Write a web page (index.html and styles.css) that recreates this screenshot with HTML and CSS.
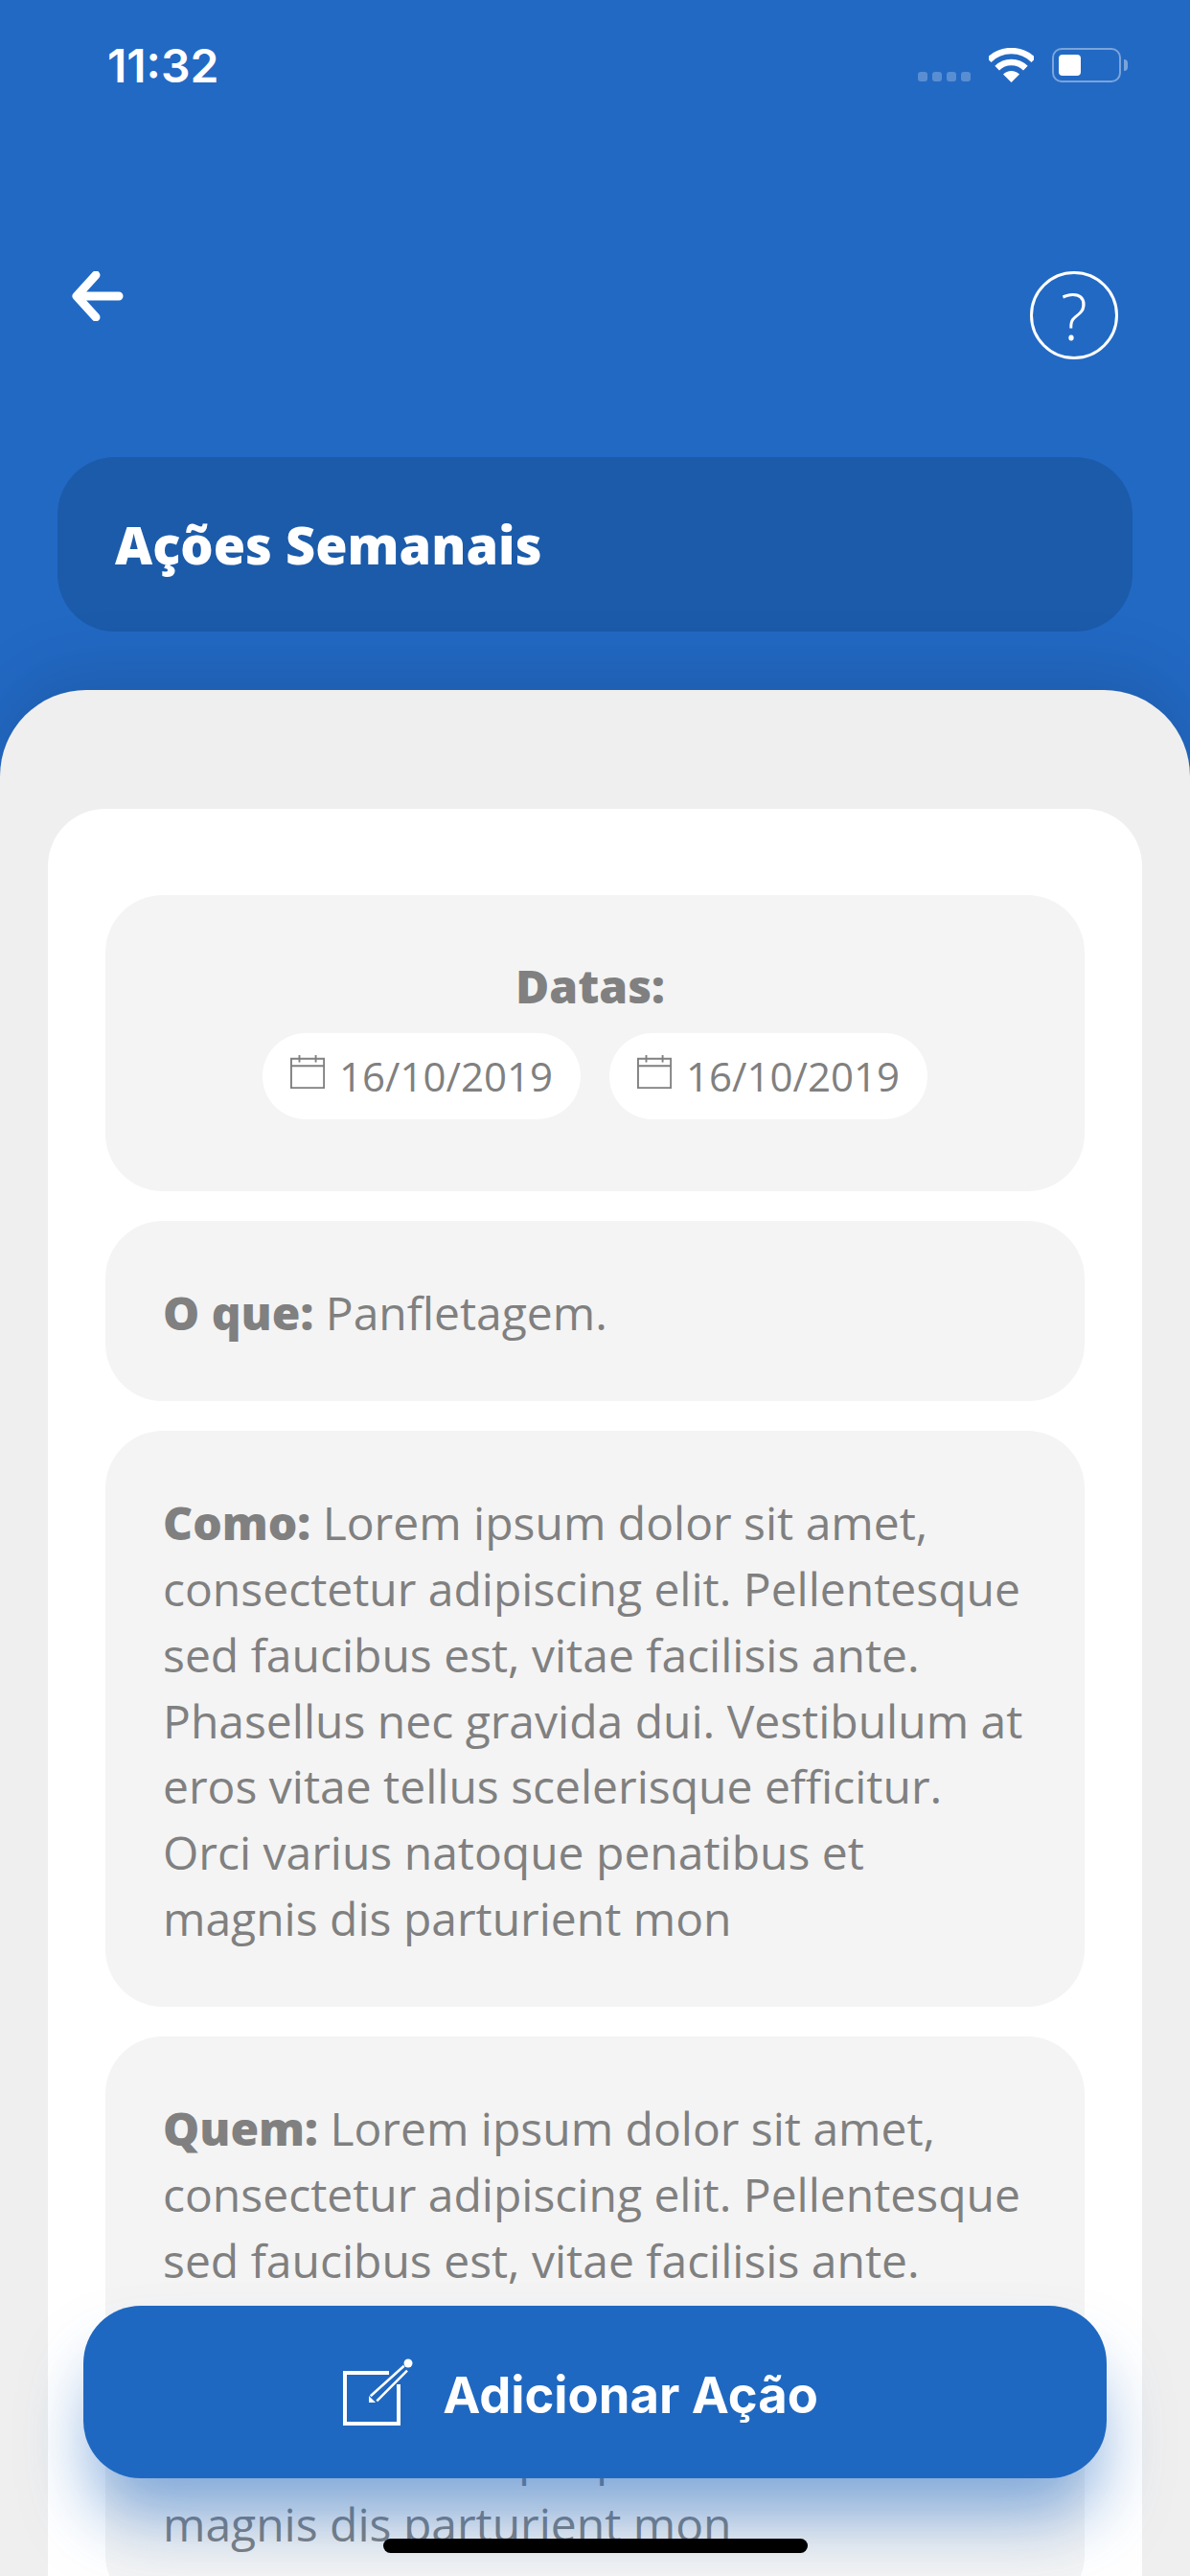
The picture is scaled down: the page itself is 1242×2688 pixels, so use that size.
FILE: index.html
```html
<!DOCTYPE html>
<html lang="pt-BR">
<head>
  <meta charset="UTF-8">
  <title>Ações Semanais</title>
  <link rel="stylesheet" href="styles.css">
</head>
<body>
  <header class="header">
    <div class="status-bar">
      <span class="clock">11:32</span>
      <div class="status-icons">
        <div class="signal"><i></i><i></i><i></i><i></i></div>
        <svg class="wifi" width="47" height="36" viewBox="0 0 47 36">
          <path d="M0.2 12.7A33 33 0 0 1 46.8 12.7M8.65 21.15A21 21 0 0 1 38.35 21.15" fill="none" stroke="#fff" stroke-width="6.5"/>
          <path d="M23.5 36L15 27.5A12 12 0 0 1 32 27.5Z" fill="#fff"/>
        </svg>
        <div class="battery"><div class="battery-fill"></div></div>
      </div>
    </div>

    <div class="nav">
      <svg class="back" width="54" height="52" viewBox="0 0 54 52">
        <path d="M25 4L5 26L25 48M5 26H49" fill="none" stroke="#fff" stroke-width="9" stroke-linecap="round" stroke-linejoin="round"/>
      </svg>
      <div class="help">?</div>
    </div>

    <div class="title-box">
      <h1>Ações Semanais</h1>
    </div>
  </header>

  <main class="sheet">
    <div class="card">
      <section class="panel panel-dates">
        <strong class="dates-label">Datas:</strong>
        <div class="chips">
          <div class="chip">
            <svg width="38" height="38" viewBox="0 0 38 38"><path d="M1 5H37V37H1ZM1 13H37M10 1V9M28 1V9" fill="none" stroke="#808080" stroke-width="2"/></svg>
            <span>16/10/2019</span>
          </div>
          <div class="chip">
            <svg width="38" height="38" viewBox="0 0 38 38"><path d="M1 5H37V37H1ZM1 13H37M10 1V9M28 1V9" fill="none" stroke="#808080" stroke-width="2"/></svg>
            <span>16/10/2019</span>
          </div>
        </div>
      </section>

      <section class="panel">
        <p><strong>O que:</strong> Panfletagem.</p>
      </section>

      <section class="panel">
        <p><strong>Como:</strong> Lorem ipsum dolor sit amet,<br>consectetur adipiscing elit. Pellentesque<br>sed faucibus est, vitae facilisis ante.<br>Phasellus nec gravida dui. Vestibulum at<br>eros vitae tellus scelerisque efficitur.<br>Orci varius natoque penatibus et<br>magnis dis parturient mon</p>
      </section>

      <section class="panel">
        <p><strong>Quem:</strong> Lorem ipsum dolor sit amet,<br>consectetur adipiscing elit. Pellentesque<br>sed faucibus est, vitae facilisis ante.<br>Phasellus nec gravida dui. Vestibulum at<br>eros vitae tellus scelerisque efficitur.<br>Orci varius natoque penatibus et<br>magnis dis parturient mon</p>
      </section>
    </div>
  </main>

  <button class="add-btn" type="button">
    <svg width="76" height="72" viewBox="0 0 76 72">
      <path d="M50 16H4V69H60V28" fill="none" stroke="#fff" stroke-width="4"/>
      <path d="M30.7 40.3L65.7 8.7M37.3 45.3L69 13.7" fill="none" stroke="#fff" stroke-width="2.5"/>
      <path d="M29 40L29 47L36 47Z" fill="#fff"/>
      <circle cx="70" cy="6" r="4.5" fill="#fff"/>
    </svg>
    <span>Adicionar Ação</span>
  </button>

  <div class="home-bar"></div>
</body>
</html>
```

FILE: styles.css
```css
* {
  box-sizing: border-box;
}

html,
body {
  margin: 0;
  height: 2688px;
  overflow: hidden;
}

body {
  display: flex;
  flex-direction: column;
  position: relative;
  font-family: "Open Sans", sans-serif;
  background-color: #2269c4;
  color: #808080;
}

.header {
  flex: none;
  height: 720px;
  padding: 0 60px;
}

.status-bar {
  display: flex;
  justify-content: space-between;
  align-items: center;
  height: 136px;
  padding: 0 12px 0 52px;
}

.clock {
  font-family: Inter, sans-serif;
  font-size: 48px;
  font-weight: 600;
  color: #fff;
}

.status-icons {
  display: flex;
  align-items: flex-end;
  gap: 19px;
}

.signal {
  display: flex;
  gap: 5px;
  margin-bottom: 1px;
}

.signal i {
  width: 10px;
  height: 10px;
  border-radius: 3px;
  background-color: rgba(255, 255, 255, 0.25);
}

.battery {
  position: relative;
  width: 72px;
  height: 36px;
  padding: 5px;
  border: 2px solid rgba(255, 255, 255, 0.4);
  border-radius: 10px;
}

.battery::after {
  content: "";
  position: absolute;
  top: 10px;
  right: -9px;
  width: 4px;
  height: 12px;
  border-radius: 0 6px 6px 0;
  background-color: rgba(255, 255, 255, 0.4);
}

.battery-fill {
  width: 23px;
  height: 100%;
  border-radius: 4px;
  background-color: #fff;
}

.nav {
  display: flex;
  justify-content: space-between;
  align-items: flex-start;
  height: 341px;
  padding: 147px 15px 0 15px;
}

.help {
  display: flex;
  justify-content: center;
  align-items: center;
  width: 92px;
  height: 92px;
  border: 3px solid #fff;
  border-radius: 50%;
  font-size: 66px;
  font-weight: 300;
  line-height: 1;
  color: #fff;
}

.title-box {
  display: flex;
  align-items: center;
  height: 182px;
  padding: 0 60px;
  border-radius: 60px;
  background-color: #1b5baa;
}

h1 {
  margin: 0;
  font-size: 54px;
  font-weight: 800;
  color: #fff;
}

.sheet {
  position: relative;
  flex: 1;
  padding: 124px 50px 0;
  border-radius: 90px 90px 0 0;
  background-color: #efefef;
  box-shadow: 0 -20px 70px rgba(0, 0, 0, 0.12);
}

.card {
  display: flex;
  flex-direction: column;
  gap: 31px;
  padding: 90px 60px 60px;
  border-radius: 60px;
  background-color: #fff;
}

.panel {
  padding: 62px 60px 58px;
  border-radius: 60px;
  background-color: #f4f4f4;
  font-size: 48px;
  line-height: 68.7px;
}

.panel strong {
  font-weight: 800;
}

.panel p {
  margin: 0;
  white-space: nowrap;
}

.panel-dates {
  display: flex;
  flex-direction: column;
  align-items: center;
  padding: 61px 60px 75px;
}

.dates-label {
  padding-right: 10px;
}

.chips {
  display: flex;
  gap: 30px;
  margin-top: 14px;
}

.chip {
  display: flex;
  align-items: center;
  gap: 15px;
  width: 332px;
  height: 90px;
  padding: 0 29px;
  border-radius: 45px;
  background-color: #fff;
  font-size: 42px;
  line-height: 1;
}

.chip svg {
  margin-top: -10px;
}

.add-btn {
  position: absolute;
  top: 2406px;
  left: 87px;
  display: flex;
  justify-content: center;
  align-items: center;
  gap: 30px;
  width: 1068px;
  height: 180px;
  padding: 0 32px 0 0;
  border: none;
  border-radius: 60px;
  background-color: #1f68c1;
  box-shadow: 0 50px 70px -10px rgba(31, 104, 193, 0.55);
  font-family: Inter, sans-serif;
  font-size: 52.5px;
  font-weight: 700;
  color: #fff;
}

.add-btn span {
  margin-top: 6px;
}

.home-bar {
  position: absolute;
  top: 2649px;
  left: 400px;
  width: 443px;
  height: 15px;
  border-radius: 8px;
  background-color: #000;
}
```
